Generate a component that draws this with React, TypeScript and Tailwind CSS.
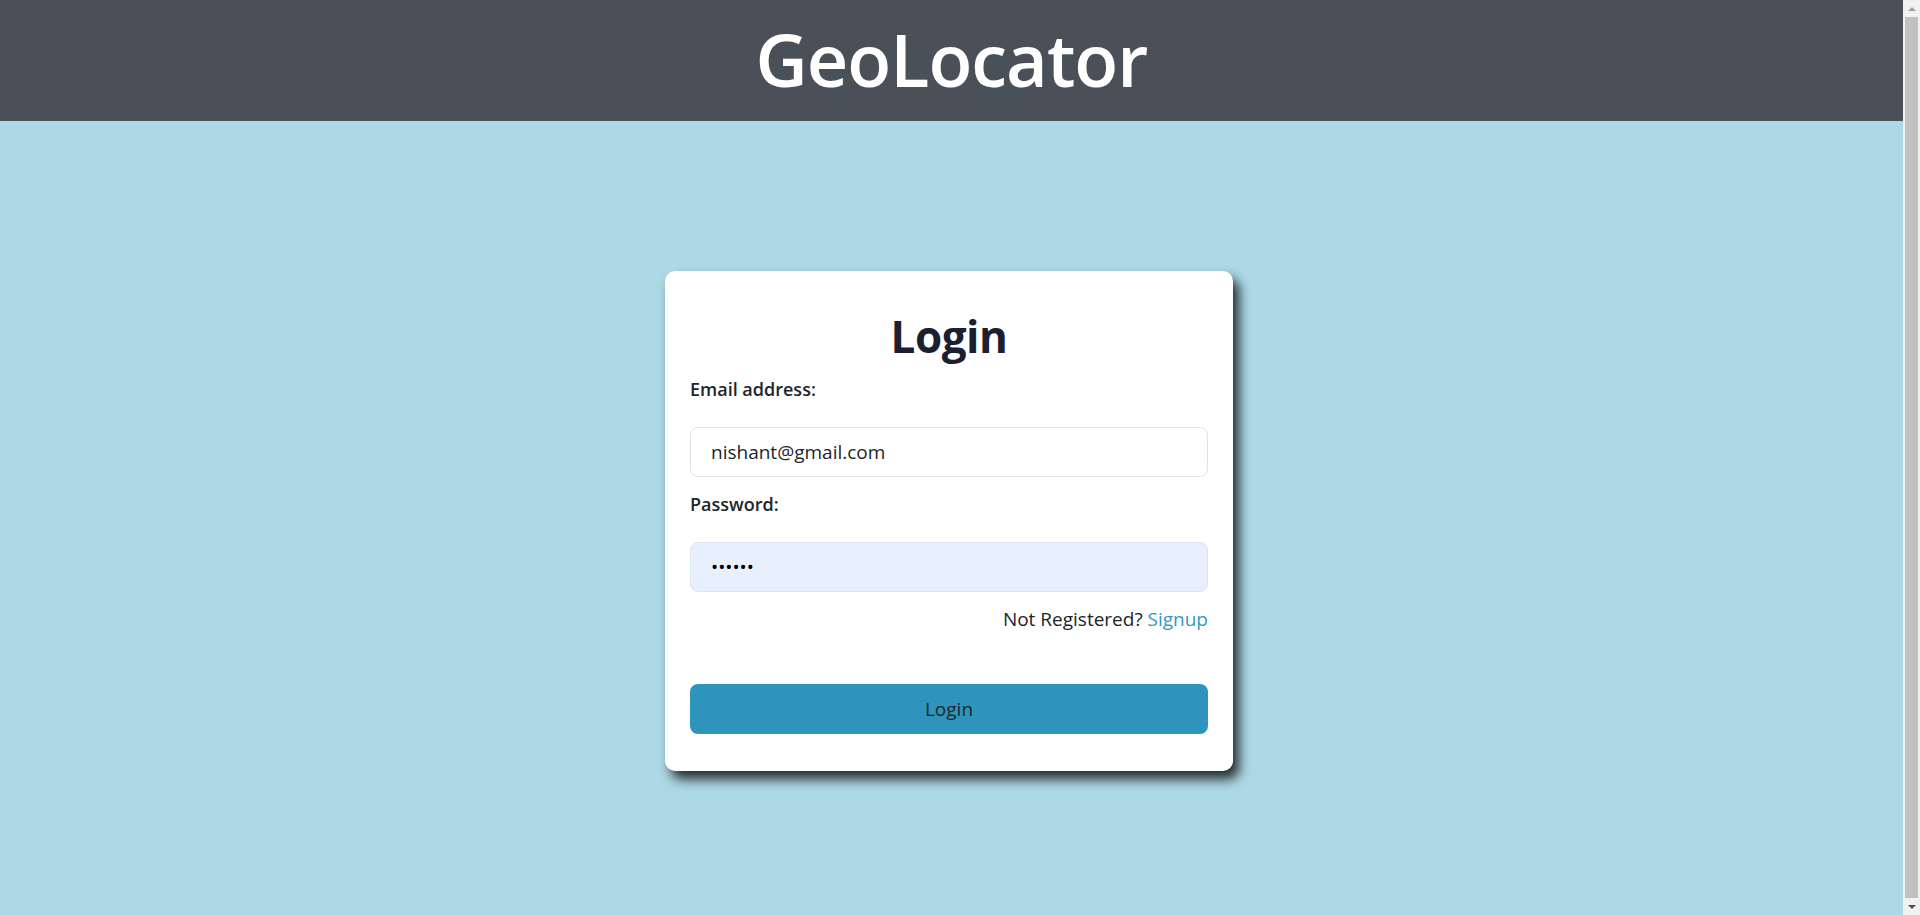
import { useState } from "react";

const FONT = "font-['Open_Sans','Noto_Sans',sans-serif]";

function FakeScrollbar() {
  return (
    <div className="flex h-full w-[17px] shrink-0 flex-col bg-[#f1f1f1]">
      <div className="flex h-[17px] items-center justify-center">
        <div className="h-0 w-0 border-x-[4px] border-b-[4px] border-x-transparent border-b-[#a3a3a3]" />
      </div>
      <div className="mx-[2px] flex-1 bg-[#c1c1c1]" />
      <div className="flex h-[17px] items-center justify-center">
        <div className="h-0 w-0 border-x-[4px] border-t-[4px] border-x-transparent border-t-[#505050]" />
      </div>
    </div>
  );
}

export default function App() {
  const [email, setEmail] = useState("nishant@gmail.com");
  const [password, setPassword] = useState("123456");

  return (
    <div className={`${FONT} flex h-screen bg-[#add8e6] text-[#212529]`}>
      <div className="min-w-0 flex-1 overflow-hidden">
        <header className="flex h-[121px] items-center justify-center bg-[#495057]">
          <h1 className="pb-[4px] text-[72px] font-semibold leading-none tracking-[-1px] text-white">GeoLocator</h1>
        </header>

        <main className="flex justify-center pt-[150px] pr-[5px] pb-[150px]">
          <form
            className="flex w-[568px] flex-col rounded-[10px] bg-white px-[25px] pt-[35px] pb-[37px] shadow-[6px_8px_12px_rgba(0,0,0,0.8)]"
            onSubmit={(e) => e.preventDefault()}
          >
            <h2 className="text-center text-[44px] font-bold leading-[60px] tracking-[-0.5px] text-[#1b2030]">Login</h2>

            <label htmlFor="email" className="mt-[8px] text-[18px] font-semibold leading-[30px]">
              Email address:
            </label>
            <input
              id="email"
              type="email"
              value={email}
              onChange={(e) => setEmail(e.target.value)}
              className="mt-[23px] h-[50px] rounded-[8px] border border-[#dee2e6] bg-white px-[20px] text-[19px] text-[#212529] outline-none"
            />

            <label htmlFor="password" className="mt-[12px] text-[18px] font-semibold leading-[30px]">
              Password:
            </label>
            <input
              id="password"
              type="password"
              value={password}
              onChange={(e) => setPassword(e.target.value)}
              className="mt-[23px] h-[50px] rounded-[8px] border border-[#dde5f3] bg-[#e8f0fe] px-[20px] text-[19px] text-black outline-none"
            />

            <p className="mt-[12px] text-right text-[19px] leading-[30px]">
              Not Registered?{" "}
              <a href="#" className="text-[#3399c7] no-underline">
                Signup
              </a>
            </p>

            <button
              type="submit"
              className="mt-[50px] h-[50px] rounded-[8px] bg-[#2e94bb] text-[19px] font-medium text-[#212529]"
            >
              Login
            </button>
          </form>
        </main>
      </div>
      <FakeScrollbar />
    </div>
  );
}
